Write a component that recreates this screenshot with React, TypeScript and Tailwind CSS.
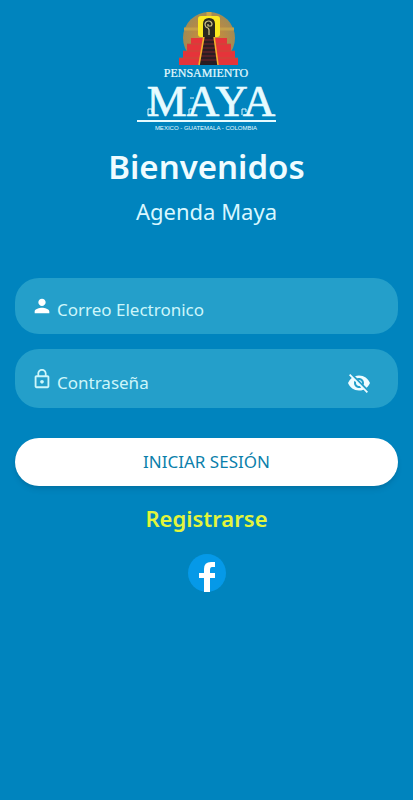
import React, { useState } from 'react';
import { MdPerson, MdLockOutline, MdVisibility, MdVisibilityOff } from 'react-icons/md';

const Logo: React.FC = () => (
  <svg viewBox="0 0 144 124" className="w-36" role="img" aria-label="Pensamiento Maya">
    <defs>
      <radialGradient id="sun">
        <stop offset="0" stopColor="#d0913a" />
        <stop offset="0.6" stopColor="#b98a45" />
        <stop offset="1" stopColor="#a08b55" />
      </radialGradient>
    </defs>
    <circle cx="74" cy="28" r="26" fill="url(#sun)" />
    <path d="M49 19H99" stroke="#c4a04a" strokeWidth="3" />
    <path d="M74 2V8" stroke="#cfa545" strokeWidth="5" />

    {/* pyramid steps */}
    <g fill="#e5343a">
      <path d="M56 28H92V34H56Z" />
      <path d="M52 34H96V41H52Z" />
      <path d="M48 41H100V48H48Z" />
      <path d="M44 48H103V55H44Z" />
    </g>
    <path d="M52 34H96M48 41H100M44 48H103" stroke="#b85a3a" strokeWidth="0.7" />
    <path d="M69 26H79L83 55H64Z" fill="#2a1c22" />
    <path d="M69 30H79M68 34H80M67 38H80M67 42H81M66 46H82M65 50H82" stroke="#8c2a30" strokeWidth="0.8" />
    <path d="M69 26L64 55M79 26L83 55" stroke="#f5b02c" strokeWidth="1.6" />

    {/* temple door */}
    <rect x="63" y="6" width="22" height="21" rx="3" fill="#fbe91f" />
    <path d="M68 27V14Q68 8 74 8T80 14V27Z" fill="#29281f" />
    <path d="M73 14V16H76Q78 14 76 12Q74 10 71 12Q69 14 71 17Q74 18 74 20V25" fill="none" stroke="#cfc48a" strokeWidth="1.2" />

    <g fill="#e6fbff" stroke="#e6fbff">
      <text x="71" y="67" textAnchor="middle" className="font-['Liberation_Serif',serif] text-[12px]" strokeWidth="0.2">PENSAMIENTO</text>
      <text x="76" y="106" textAnchor="middle" className="font-['Liberation_Serif',serif] text-[45px]" strokeWidth="0.7">MAYA</text>
      <rect x="2" y="110" width="139" height="2" stroke="none" />
      <text x="71" y="120" textAnchor="middle" className="font-['Liberation_Sans',sans-serif] text-[6px]" stroke="none">MEXICO - GUATEMALA - COLOMBIA</text>
    </g>
    {/* curls at the feet of the letters */}
    <path d="M17 102V99H13V105M58 102V99H54V105M111 102V99H107V105M55 88H59" fill="none" stroke="#e6fbff" strokeWidth="1" />
  </svg>
);

const FacebookIcon: React.FC = () => (
  <svg viewBox="0 0 40 40" className="w-10" aria-hidden="true">
    <circle cx="20" cy="20" r="19" fill="#0599e8" />
    <path d="M17 39V25H12V20H17V16Q17 9 24 9H28V14H25Q23 14 23 17V20H28V25H23V39Z" fill="#fff" />
  </svg>
);

export default function App() {
  const [email, setEmail] = useState('');
  const [password, setPassword] = useState('');
  const [visible, setVisible] = useState(false);

  return (
    <main className="flex min-h-screen flex-col items-center bg-[#0084be] px-[15px] pt-[10px] font-['Noto_Sans',sans-serif]">
      <Logo />

      <h1 className="mt-[9px] text-[33px] leading-12 font-semibold text-[#effcff]">Bienvenidos</h1>
      <h2 className="text-[22px] leading-10 text-[#d9f7ff]">Agenda Maya</h2>

      <form className="mt-[47px] flex w-full flex-col" onSubmit={(e) => e.preventDefault()}>
        <div className="flex h-14 items-center gap-1 rounded-3xl bg-[#249fca] px-4">
          <MdPerson size={22} className="shrink-0 text-white" />
          <input
            type="email"
            aria-label="Correo Electronico"
            placeholder="Correo Electronico"
            className="min-w-0 flex-1 bg-transparent pt-2 text-[17px] text-white outline-none placeholder:text-[#cdf6fa]"
            value={email}
            onChange={(e) => setEmail(e.target.value)}
          />
        </div>

        <div className="mt-[15px] flex h-[59px] items-center gap-1 rounded-3xl bg-[#249fca] px-4">
          <MdLockOutline size={22} className="shrink-0 text-[#cdf6fa]" />
          <input
            type={visible ? 'text' : 'password'}
            aria-label="Contraseña"
            placeholder="Contraseña"
            className="min-w-0 flex-1 bg-transparent pt-2 text-[17px] text-white outline-none placeholder:text-[#cdf6fa]"
            value={password}
            onChange={(e) => setPassword(e.target.value)}
          />
          <button
            type="button"
            aria-label="Mostrar contraseña"
            className="mr-[11px] pt-2 text-[#effcff]"
            onClick={() => setVisible(!visible)}
          >
            {visible ? <MdVisibility size={24} /> : <MdVisibilityOff size={24} />}
          </button>
        </div>

        <button type="submit" className="mt-[30px] h-12 rounded-3xl bg-white text-[17px] text-[#0b7fab] shadow-md">
          INICIAR SESIÓN
        </button>
      </form>

      <a href="#registro" className="mt-4 text-[22px] leading-8 font-semibold text-[#e2f53c]">Registrarse</a>
      <button type="button" aria-label="Facebook" className="mt-[19px]">
        <FacebookIcon />
      </button>
    </main>
  );
}
